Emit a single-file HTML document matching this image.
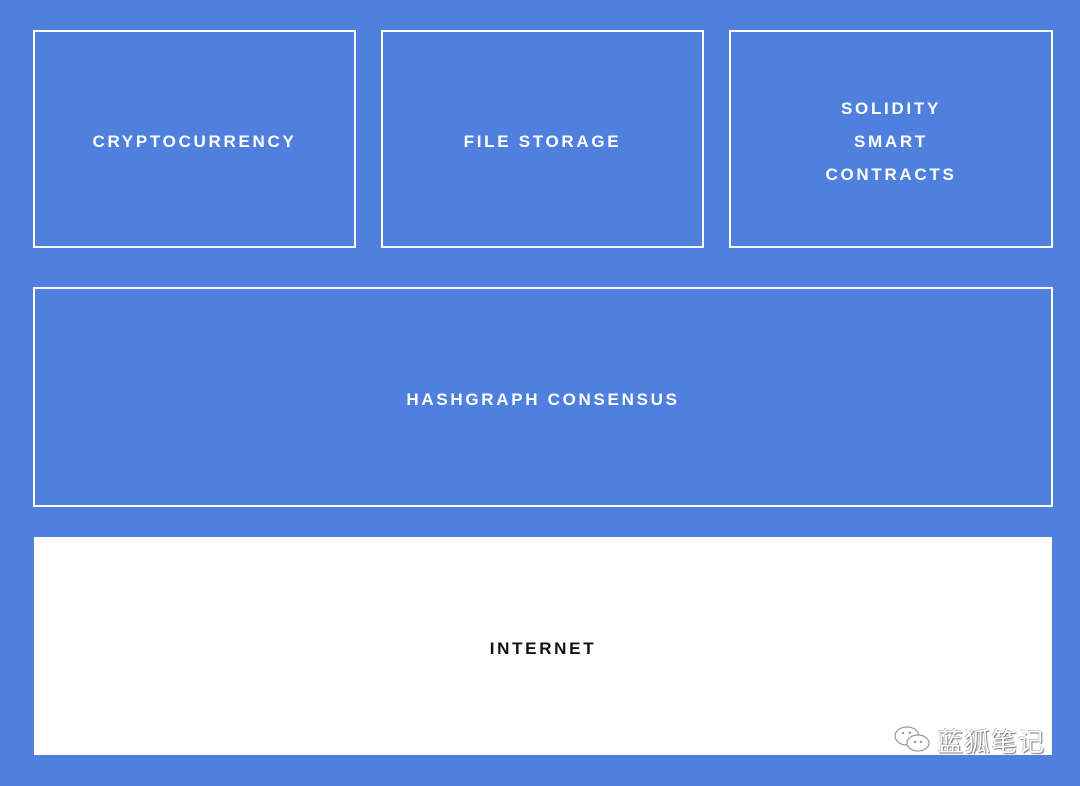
<!DOCTYPE html>
<html><head><meta charset="utf-8"><style>
body{margin:0;width:1080px;height:786px;background:#4f80de;position:relative;overflow:hidden;font-family:"Liberation Sans",sans-serif}
.b{position:absolute;box-sizing:border-box;border:2px solid #fff;display:flex;align-items:center;justify-content:center;text-align:center;color:#fff;font-weight:bold;font-size:17px;letter-spacing:2.7px;line-height:33px;padding-top:4px}
.w{background:#fff;color:#111;border:none}
.wm{position:absolute;left:893px;top:722px;font-family:"Noto Sans CJK SC",sans-serif;font-size:26px;color:#fff;text-shadow:1px 1px 1px #777,-0.5px -0.5px 0 #999;letter-spacing:1px}
</style></head><body>
<div class="b" style="left:33px;top:30px;width:323px;height:218px">CRYPTOCURRENCY</div>
<div class="b" style="left:381px;top:30px;width:323px;height:218px">FILE STORAGE</div>
<div class="b" style="left:729px;top:30px;width:324px;height:218px">SOLIDITY<br>SMART<br>CONTRACTS</div>
<div class="b" style="left:33px;top:287px;width:1020px;height:220px">HASHGRAPH CONSENSUS</div>
<div class="b w" style="left:34px;top:537px;width:1018px;height:218px">INTERNET</div>
<div class="wm"><svg width="40" height="30" viewBox="0 0 40 30" style="vertical-align:-4px;margin-right:4px"><g fill="#fff" stroke="#999" stroke-width="1.2"><ellipse cx="14" cy="11" rx="12" ry="9"/><ellipse cx="25" cy="18" rx="11" ry="8"/></g><g fill="#999"><circle cx="22" cy="17" r="1.2"/><circle cx="28" cy="17" r="1.2"/><circle cx="10" cy="8" r="1.2"/><circle cx="17" cy="8" r="1.2"/></g></svg>蓝狐笔记</div>
</body></html>
